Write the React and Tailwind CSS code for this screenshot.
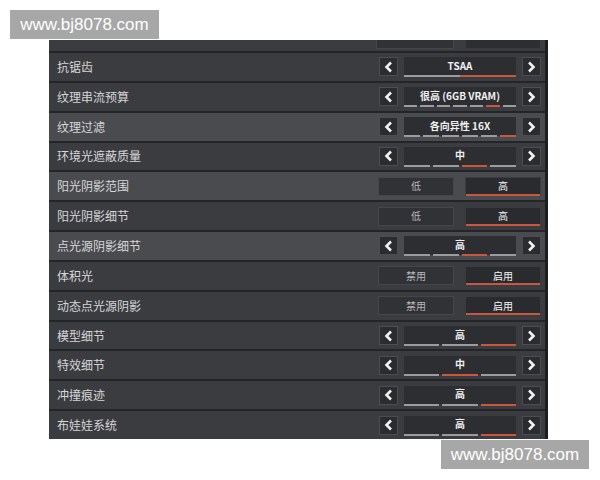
import React from 'react';

const rows = [
  { label: '抗锯齿', type: 'select', value: 'TSAA', segs: 2, active: 1, joined: true },
  { label: '纹理串流预算', type: 'select', value: '很高 (6GB VRAM)', segs: 7, active: 5 },
  { label: '纹理过滤', type: 'select', value: '各向异性 16X', segs: 6, active: 5, hl: true },
  { label: '环境光遮蔽质量', type: 'select', value: '中', segs: 4, active: 2 },
  { label: '阳光阴影范围', type: 'toggle', options: ['低', '高'], active: 1, hl: true },
  { label: '阳光阴影细节', type: 'toggle', options: ['低', '高'], active: 1 },
  { label: '点光源阴影细节', type: 'select', value: '高', segs: 4, active: 2, hl: true },
  { label: '体积光', type: 'toggle', options: ['禁用', '启用'], active: 1 },
  { label: '动态点光源阴影', type: 'toggle', options: ['禁用', '启用'], active: 1 },
  { label: '模型细节', type: 'select', value: '高', segs: 3, active: 2 },
  { label: '特效细节', type: 'select', value: '中', segs: 3, active: 1 },
  { label: '冲撞痕迹', type: 'select', value: '高', segs: 3, active: 2 },
  { label: '布娃娃系统', type: 'select', value: '高', segs: 3, active: 2 },
];

function Chevron({ dir }) {
  return (
    <svg width="9" height="12" viewBox="0 0 9 12">
      <polyline
        points={dir === 'left' ? '7,1.5 2.5,6 7,10.5' : '2,1.5 6.5,6 2,10.5'}
        fill="none"
        stroke="#f2f2f2"
        strokeWidth="2.6"
        strokeLinejoin="miter"
      />
    </svg>
  );
}

function ArrowBtn({ dir }) {
  return (
    <div className="w-[19px] h-[19px] flex items-center justify-center bg-[#2b2c30] border border-[#4c4d52]">
      <Chevron dir={dir} />
    </div>
  );
}

function Select({ value, segs, active, joined }) {
  return (
    <div className="flex items-center gap-[6px]">
      <ArrowBtn dir="left" />
      <div className="relative w-[112px] h-[19px] bg-[#2d2e32] flex items-center justify-center">
        <span className="text-[10px] font-semibold text-[#f0f0f0] leading-none -mt-[2px]">{value}</span>
        <div className={`absolute left-0 right-0 -bottom-[1px] flex ${joined ? 'gap-0' : 'gap-[3px]'}`}>
          {Array.from({ length: segs }).map((_, i) => (
            <div
              key={i}
              className={`flex-1 h-[2px] ${i === active ? 'bg-[#c8573e]' : 'bg-[#9c9c9e]'}`}
            />
          ))}
        </div>
      </div>
      <ArrowBtn dir="right" />
    </div>
  );
}

function Toggle({ options, active }) {
  return (
    <div className="flex items-center gap-[11px]">
      {options.map((o, i) => (
        <div
          key={o}
          className={`relative w-[76px] h-[19px] flex items-center justify-center border ${
            i === active ? 'bg-[#2a2b2f] border-[#3a3b3f]' : 'bg-[#313236] border-[#45464a]'
          }`}
        >
          <span className={`text-[10px] leading-none ${i === active ? 'text-[#f4f4f4]' : 'text-[#b8b8ba]'}`}>{o}</span>
          {i === active && <div className="absolute left-0 right-0 -bottom-[1px] h-[2px] bg-[#c8573e]" />}
        </div>
      ))}
    </div>
  );
}

function Row({ row }) {
  return (
    <div
      className={`flex-1 flex items-center justify-between border-t-2 border-[#242529] pl-[8px] pr-[4px] ${
        row.hl ? 'bg-[#4a4b4f]' : 'bg-[#3b3c40]'
      }`}
    >
      <span className="text-[12px] text-[#d6d6d8]">{row.label}</span>
      {row.type === 'select' ? (
        <Select value={row.value} segs={row.segs} active={row.active} joined={row.joined} />
      ) : (
        <Toggle options={row.options} active={row.active} />
      )}
    </div>
  );
}

function Watermark({ className }) {
  return (
    <div
      className={`absolute flex items-center justify-center bg-[#a7a7a7] text-white text-[17px] ${className}`}
      style={{ fontFamily: '"Liberation Sans", Arial, sans-serif' }}
    >
      www.bj8078.com
    </div>
  );
}

export default function App() {
  return (
    <div
      className="relative w-[600px] h-[480px] bg-white overflow-hidden"
      style={{ fontFamily: '"Noto Sans CJK SC", "Noto Sans", sans-serif' }}
    >
      <Watermark className="left-[10px] top-[10px] w-[149px] h-[29px]" />
      <div className="ml-[49px] mt-[40px] w-[499px] h-[399px] flex flex-col bg-[#3b3c40] border-r-[3px] border-[#1d1e21] overflow-hidden">
        {/* partially visible row at the top */}
        <div className="h-[11px] flex justify-end items-end pr-[4px] pb-[2px] bg-[#3b3c40]">
          <div className="flex gap-[11px]">
            <div className="w-[78px] h-[12px] bg-[#313236] border border-[#45464a]" />
            <div className="w-[76px] h-[12px] bg-[#2d2e32] border border-[#3a3b3f]" />
          </div>
        </div>
        {rows.map((r) => (
          <Row key={r.label} row={r} />
        ))}
      </div>
      <Watermark className="left-[441px] top-[440px] w-[148px] h-[29px]" />
    </div>
  );
}
